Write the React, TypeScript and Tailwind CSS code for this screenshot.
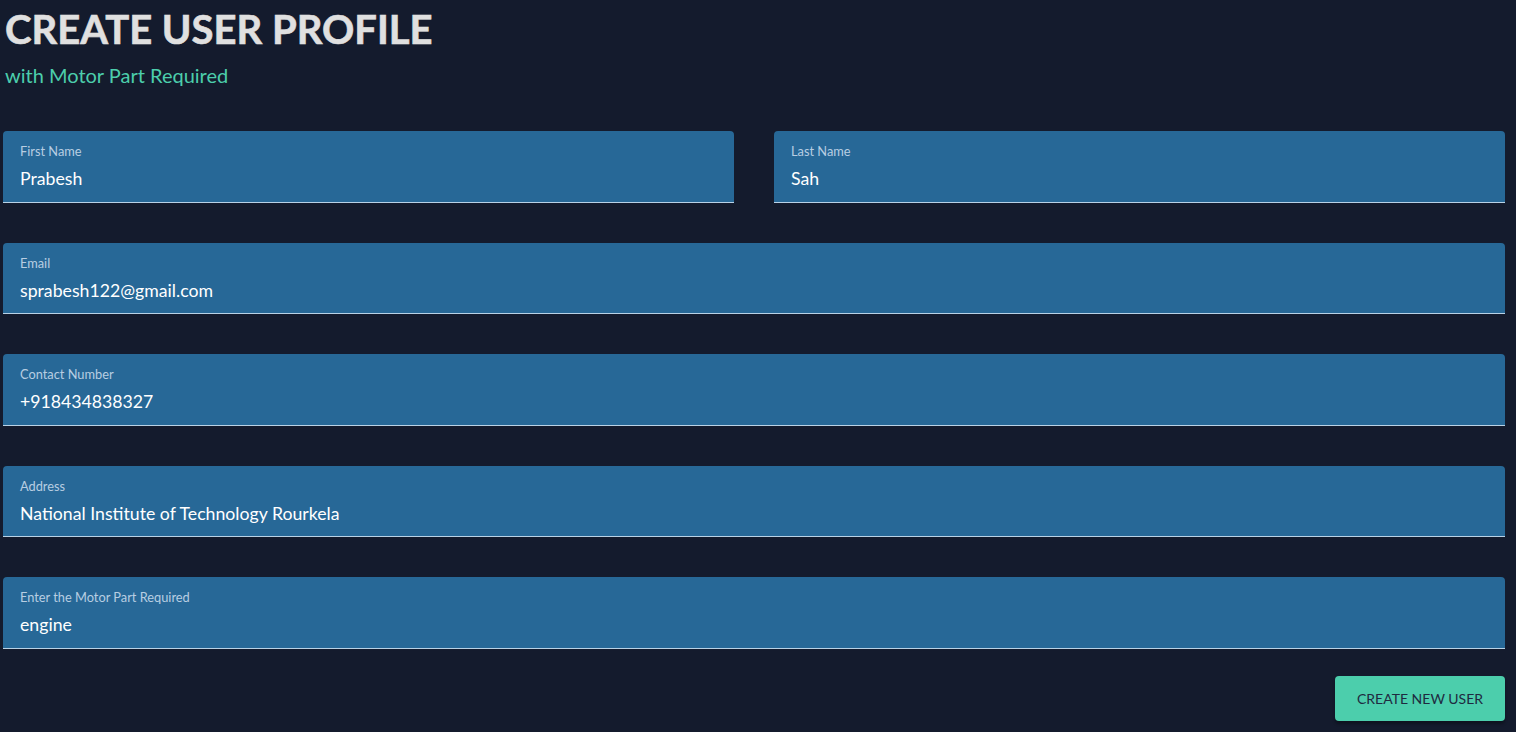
import React from "react";

const font = { fontFamily: "Lato, 'Noto Sans', sans-serif" };

function Field({ label, value }: { label: string; value: string }) {
  return (
    <div className="h-[71.5px] bg-[#276897] rounded-t-[4px] border-b border-[#b9d2e6] pl-[17px] pr-3 flex flex-col">
      <div className="mt-[12px] h-[16px] leading-[16px] text-[12.8px] text-[#b8cee2]">{label}</div>
      <div className="mt-[9px] h-[22px] leading-[22px] text-[17.7px] text-white">{value}</div>
    </div>
  );
}

export default function App() {
  return (
    <div className="min-h-[732px] w-full bg-[#141b2d] pl-[3px] pr-[11px]" style={font}>
      <div className="pt-[6px] pl-[2px]">
        <h1 className="h-[46px] leading-[46px] text-[40px] font-bold text-[#e0e0e0] [-webkit-text-stroke:0.6px_#e0e0e0]">CREATE USER PROFILE</h1>
        <p className="mt-[11px] h-[24px] leading-[24px] text-[20px] text-[#4cceac]">with Motor Part Required</p>
      </div>
      <div className="mt-[44px] flex flex-col gap-[40px]">
        <div className="grid grid-cols-2 gap-[40px]">
          <Field label="First Name" value="Prabesh" />
          <Field label="Last Name" value="Sah" />
        </div>
        <Field label="Email" value="sprabesh122@gmail.com" />
        <Field label="Contact Number" value="+918434838327" />
        <Field label="Address" value="National Institute of Technology Rourkela" />
        <Field label="Enter the Motor Part Required" value="engine" />
      </div>
      <div className="mt-[27px] flex justify-end">
        <button className="w-[170px] h-[45px] rounded-[4px] bg-[#4cceac] text-[#1f2a40] text-[14px] shadow-[0_3px_3px_rgba(0,0,0,0.3)]">
          CREATE NEW USER
        </button>
      </div>
    </div>
  );
}
